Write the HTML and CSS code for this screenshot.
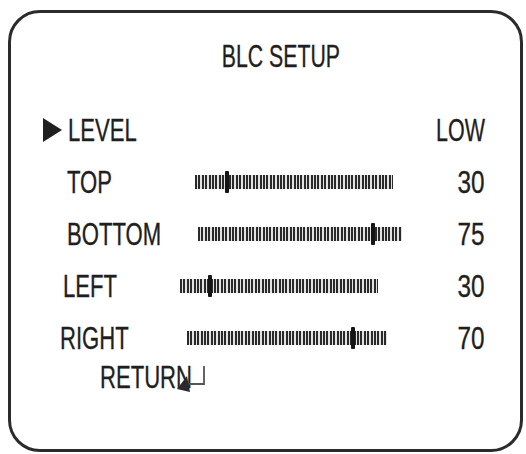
FILE: index.html
```html
<!DOCTYPE html>
<html lang="en">
<head>
    <meta charset="UTF-8">
    <title>BLC SETUP</title>
    <link rel="stylesheet" href="styles.css">
</head>
<body>
<div class="osd">
    <div class="title"><span class="txt">BLC SETUP</span></div>
    <ul class="menu">
        <li class="row">
            <div class="label label-level"><em class="cursor"></em><span class="txt">LEVEL</span></div>
            <div class="val"><span class="txt word">LOW</span></div>
        </li>
        <li class="row">
            <div class="label label-top"><span class="txt">TOP</span></div>
            <div class="bar bar-top"><i class="knob" style="left: 16%"></i></div>
            <div class="val"><span class="txt num">30</span></div>
        </li>
        <li class="row">
            <div class="label label-bottom"><span class="txt">BOTTOM</span></div>
            <div class="bar bar-bottom"><i class="knob" style="left: 86%"></i></div>
            <div class="val"><span class="txt num">75</span></div>
        </li>
        <li class="row">
            <div class="label label-left"><span class="txt">LEFT</span></div>
            <div class="bar bar-left"><i class="knob" style="left: 15%"></i></div>
            <div class="val"><span class="txt num">30</span></div>
        </li>
        <li class="row">
            <div class="label label-right"><span class="txt">RIGHT</span></div>
            <div class="bar bar-right"><i class="knob" style="left: 83%"></i></div>
            <div class="val"><span class="txt num">70</span></div>
        </li>
        <li class="row row-return">
            <div class="label label-return"><span class="txt">RETURN</span></div>
            <svg class="enter" width="34" height="30" viewBox="0 0 34 30">
                <path d="M29 1 V19 H12" fill="none" stroke="#555" stroke-width="1.8"/>
                <path d="M14 19 L8 21" fill="none" stroke="#333" stroke-width="2"/>
                <polygon points="2,24 12,11 15,27" fill="#2a2a2a"/>
            </svg>
        </li>
    </ul>
</div>
</body>
</html>
```

FILE: styles.css
```css
* {
    margin: 0;
    padding: 0;
}

ul, li {
    list-style: none;
}

body {
    width: 526px;
    height: 454px;
    overflow: hidden;
    background: #fff;
}

.osd {
    box-sizing: border-box;
    width: 515px;
    height: 442px;
    margin: 10px 0 0 8px;
    border: 3px solid #2b2b2b;
    border-radius: 32px;
    font-family: "Liberation Sans", Arial, sans-serif;
    font-size: 32px;
    line-height: 32px;
    color: #1f1f1f;
}

.txt {
    display: inline-block;
    white-space: nowrap;
    -webkit-text-stroke: 0.35px #1f1f1f;
    transform: scaleX(.69);
    transform-origin: left center;
}

.title {
    margin-top: 27px;
    padding-left: 31px;
    text-align: center;
}

.title .txt {
    transform: scaleX(.665);
    transform-origin: center;
}

.menu {
    display: flex;
    flex-direction: column;
    gap: 20px;
    margin-top: 42px;
    padding: 0 35px 0 32px;
}

.row {
    position: relative;
    display: flex;
    align-items: center;
    height: 32px;
}

.label {
    box-sizing: border-box;
    flex: none;
    width: 137px;
}

.label-level {
    display: flex;
    align-items: center;
}

.cursor {
    width: 0;
    height: 0;
    border-left: 19px solid #1f1f1f;
    border-top: 12px solid transparent;
    border-bottom: 12px solid transparent;
    margin-right: 6px;
}

.label-top, .label-bottom {
    padding-left: 24px;
}

.label-left {
    padding-left: 20px;
}

.label-right {
    padding-left: 17px;
}

.label-return {
    padding-left: 57px;
}

.row-return {
    margin-top: -13px;
}

.bar {
    position: relative;
    flex: none;
    height: 14px;
    background: repeating-linear-gradient(90deg, #2a2a2a 0 2px, #e2e2e2 2px 3.4px);
}

.bar-top {
    width: 198px;
    margin-left: 15px;
}

.bar-bottom {
    width: 204px;
    margin-left: 18px;
}

.bar-left {
    width: 198px;
}

.bar-right {
    width: 200px;
    margin-left: 7px;
}

.knob {
    position: absolute;
    top: -4px;
    width: 4px;
    height: 22px;
    margin-left: -2px;
    background: #151515;
    border-radius: 1px;
}

.val {
    margin-left: auto;
    text-align: right;
}

.val .txt {
    transform-origin: right center;
}

.val .num {
    transform: scaleX(.76);
}

.val .word {
    transform: scaleX(.67);
}

.enter {
    position: absolute;
    left: 132px;
    top: 4px;
}
```
